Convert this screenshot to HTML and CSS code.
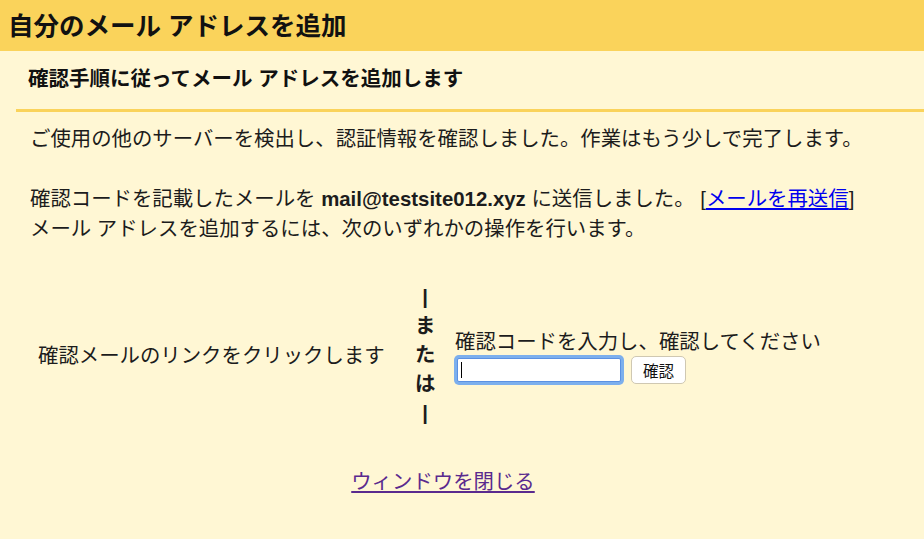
FILE: index.html
```html
<!DOCTYPE html>
<html lang="ja">
<head>
  <meta charset="UTF-8">
  <meta name="viewport" content="width=device-width, initial-scale=1.0">
  <title>自分のメール アドレスを追加</title>
  <link rel="stylesheet" href="styles.css">
</head>
<body>

  <div class="header">
    <h1>自分のメール アドレスを追加</h1>
  </div>

  <div class="step">
    <h2>確認手順に従ってメール アドレスを追加します</h2>
  </div>

  <div class="content">
    <p>ご使用の他のサーバーを検出し、認証情報を確認しました。作業はもう少しで完了します。</p>

    <p>
      確認コードを記載したメールを <b class="addr">mail@testsite012.xyz</b> に送信しました。 [<a href="#" class="resend">メールを再送信</a>]<br>
      メール アドレスを追加するには、次のいずれかの操作を行います。
    </p>

    <div class="choices">
      <div class="choice-link">確認メールのリンクをクリックします</div>
      <div class="or">|<br>ま<br>た<br>は<br>|</div>
      <div class="choice-code">
        <label for="code">確認コードを入力し、確認してください</label>
        <div class="code-row">
          <input type="text" id="code" class="code-input">
          <button class="verify">確認</button>
        </div>
      </div>
    </div>

    <div class="close">
      <a href="#" class="close-link">ウィンドウを閉じる</a>
    </div>
  </div>

</body>
</html>
```

FILE: styles.css
```css
body {
  background: #fff7d4;
  font-family: "Liberation Sans", "Noto Sans CJK JP", sans-serif;
  color: #1c1c1c;
  margin: 0;
  padding: 0;
}

.header {
  background: #fad35b;
  height: 47px;
  padding: 0 0 4px 8px;
  display: flex;
  align-items: center;
}

h1 {
  margin: 0;
  font-size: 25.5px;
  font-weight: bold;
  color: #111;
}

.step {
  margin-left: 16px;
  height: 52px;
  padding: 0 0 6px 12px;
  border-bottom: 3px solid #fad35b;
  display: flex;
  align-items: center;
}

h2 {
  margin: 0;
  font-size: 20.5px;
  font-weight: bold;
  color: #111;
}

.content {
  padding: 12px 20px 0 30px;
  font-size: 20.4px;
  line-height: 30px;
}

p {
  margin: 0 0 30px 0;
  white-space: nowrap;
}

.addr {
  font-weight: bold;
}

.resend {
  color: #0000ee;
}

.choices {
  display: flex;
  align-items: center;
  padding-left: 8px;
  margin-top: 39px;
}

.choice-link {
  width: 345px;
  flex-shrink: 0;
  white-space: nowrap;
}

.or {
  width: 20px;
  flex-shrink: 0;
  margin: 0 20px 0 32px;
  text-align: center;
  font-weight: bold;
  line-height: 29px;
}

.choice-code {
  white-space: nowrap;
}

.choice-code label {
  display: block;
  line-height: 28px;
}

.code-row {
  display: flex;
  align-items: center;
  gap: 10px;
}

/* the caret of the focused field is drawn as a thin bar */
.code-input {
  width: 158px;
  height: 20px;
  margin: 2px 0 2px 2px;
  padding: 1px 2px;
  border: 1px solid #5b91e2;
  border-radius: 2px;
  background: linear-gradient(#000, #000) no-repeat 3px center / 1px 16px, #fff;
  box-shadow: 0 0 0 3px rgba(110, 166, 240, 0.9);
  outline: none;
  font-size: 16px;
}

.verify {
  width: 55px;
  height: 28px;
  padding: 0;
  background: #fff;
  border: 1px solid #cfc8b2;
  border-radius: 5px;
  font-family: "Noto Sans CJK JP", sans-serif;
  font-size: 15.5px;
  color: #111;
  cursor: pointer;
}

.close {
  text-align: center;
  margin-top: 39px;
  padding-right: 48px;
}

.close-link {
  color: #5a2a8e;
}
```
